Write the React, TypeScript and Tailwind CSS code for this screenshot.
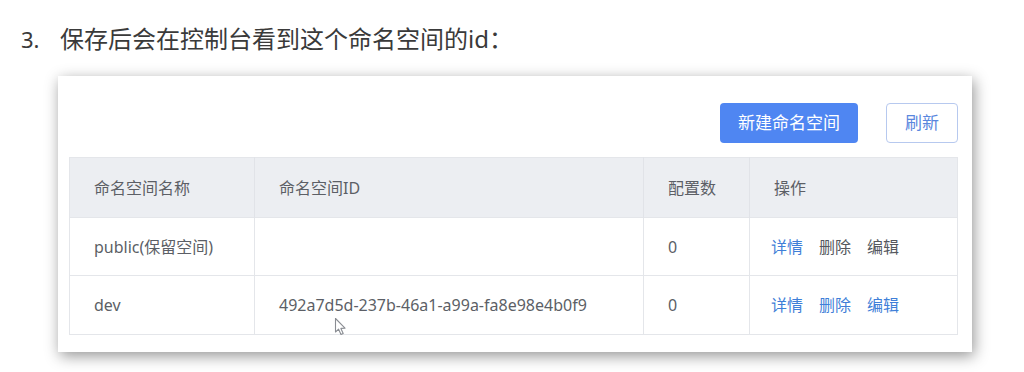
import type { ReactNode } from 'react';

type Row = {
  name: string;
  id: string;
  count: number;
  dimActions?: boolean;
};

const rows: Row[] = [
  { name: 'public(保留空间)', id: '', count: 0, dimActions: true },
  { name: 'dev', id: '492a7d5d-237b-46a1-a99a-fa8e98e4b0f9', count: 0 },
];

function Cell({ children, last }: { children?: ReactNode; last?: boolean }) {
  return (
    <td className={`px-6 align-middle ${last ? '' : 'border-r border-[#e4e6ea]'}`}>
      {children}
    </td>
  );
}

function Cursor() {
  return (
    <svg
      className="pointer-events-none absolute left-[334px] top-[317px]"
      width="13"
      height="19"
      viewBox="0 0 13 19"
      aria-hidden
    >
      <path
        d="M1.5 1.5 L1.5 15 L4.6 12.2 L7 17.5 L9.2 16.5 L6.9 11.4 L11 11.2 Z"
        fill="#fff"
        stroke="#8a8d93"
        strokeWidth="1.1"
        strokeLinejoin="round"
      />
    </svg>
  );
}

export default function App() {
  return (
    <div className="relative h-[372px] w-[1024px] overflow-hidden bg-white font-['Noto_Sans','Noto_Sans_CJK_SC',sans-serif]">
      <div className="mt-[24px] flex h-[30px] items-center pl-[21px] text-[24px] leading-[30px] text-[#3a3a3a]">
        <span className="w-[39px] text-[22px]">3.</span>
        <span>保存后会在控制台看到这个命名空间的id：</span>
      </div>

      <div className="ml-[58px] mt-[22px] h-[276px] w-[914px] bg-white pl-[11px] pr-[15px] pt-[27px] shadow-[2px_4px_14px_rgba(0,0,0,0.42)]">
        <div className="flex justify-end gap-[28px]">
          <button
            type="button"
            className="h-[40px] w-[138px] rounded-[4px] bg-[#4f86f2] text-[17px] text-white"
          >
            新建命名空间
          </button>
          <button
            type="button"
            className="-mr-px h-[40px] w-[72px] rounded-[4px] border border-[#b7c9ef] bg-white text-[17px] text-[#5a87de]"
          >
            刷新
          </button>
        </div>

        <table className="mt-[14px] w-[888px] table-fixed border-collapse border border-[#e4e6ea] text-[16px] text-[#5c5f66]">
          <colgroup>
            <col className="w-[185px]" />
            <col className="w-[389px]" />
            <col className="w-[106px]" />
            <col className="w-[208px]" />
          </colgroup>
          <thead>
            <tr className="h-[60px] bg-[#eceef2] text-left">
              <th className="border-r border-[#e1e3e8] px-6 font-normal">命名空间名称</th>
              <th className="border-r border-[#e1e3e8] px-6 font-normal">命名空间ID</th>
              <th className="border-r border-[#e1e3e8] px-6 font-normal">配置数</th>
              <th className="px-6 font-normal">操作</th>
            </tr>
          </thead>
          <tbody>
            {rows.map((r, i) => (
              <tr
                key={r.name}
                className={`${i === 0 ? 'h-[58px]' : 'h-[59px]'} border-t border-[#e4e6ea]`}
              >
                <Cell>{r.name}</Cell>
                <Cell>{r.id}</Cell>
                <Cell>{r.count}</Cell>
                <Cell last>
                  <div className="-ml-[3px] flex gap-4">
                    <span className="text-[#3f7fd8]">详情</span>
                    <span className={r.dimActions ? 'text-[#55585e]' : 'text-[#3f7fd8]'}>删除</span>
                    <span className={r.dimActions ? 'text-[#55585e]' : 'text-[#3f7fd8]'}>编辑</span>
                  </div>
                </Cell>
              </tr>
            ))}
          </tbody>
        </table>
      </div>

      <Cursor />
    </div>
  );
}
